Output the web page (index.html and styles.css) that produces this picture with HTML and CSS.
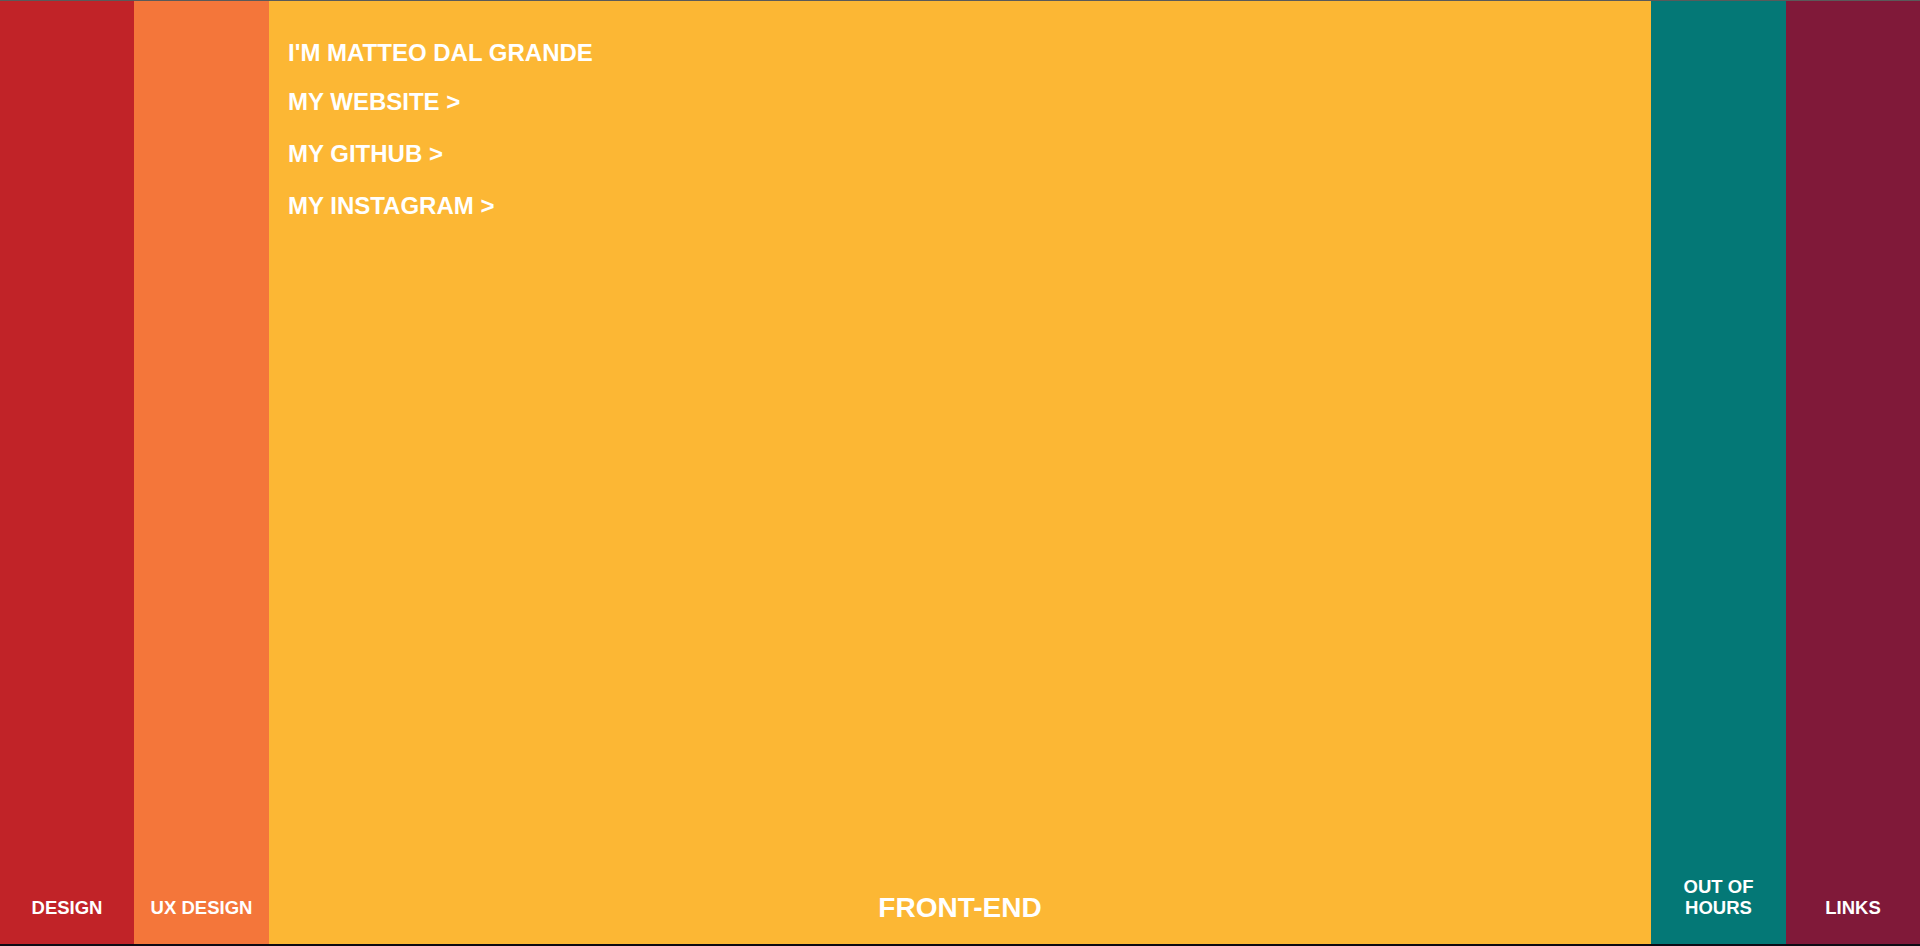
FILE: index.html
```html
<!DOCTYPE html>
<html lang="en">
<head>
<meta charset="utf-8">
<title>Matteo Dal Grande</title>
<link rel="stylesheet" href="styles.css">
</head>
<body>
<main class="panels">
  <section class="panel panel-design">
    <h2 class="label">DESIGN</h2>
  </section>
  <section class="panel panel-ux">
    <h2 class="label">UX DESIGN</h2>
  </section>
  <section class="panel panel-front panel-open">
    <div class="content">
      <h1 class="title">I'M MATTEO DAL GRANDE</h1>
      <ul class="links">
        <li><a href="#">MY WEBSITE &gt;</a></li>
        <li><a href="#">MY GITHUB &gt;</a></li>
        <li><a href="#">MY INSTAGRAM &gt;</a></li>
      </ul>
    </div>
    <h2 class="label label-big">FRONT-END</h2>
  </section>
  <section class="panel panel-hours">
    <h2 class="label">OUT OF<br>HOURS</h2>
  </section>
  <section class="panel panel-links">
    <h2 class="label">LINKS</h2>
  </section>
</main>
</body>
</html>
```

FILE: styles.css
```css
html, body {
  margin: 0;
  padding: 0;
}

body {
  background: #0e0a14;
  border-top: 1px solid #5a5a5a;
  font-family: "Liberation Sans", Arial, sans-serif;
  color: #ffffff;
  height: 945px;
  overflow: hidden;
}

.panels {
  display: grid;
  grid-template-columns: 134px 135px 1fr 135px 134px;
  height: 943px;
}

.panel {
  display: flex;
  flex-direction: column;
  justify-content: flex-end;
  align-items: stretch;
  min-width: 0;
}

.panel-design { background: #c12328; }
.panel-ux { background: #f4763a; }
.panel-front { background: #fcb734; }
.panel-hours { background: #047876; }
.panel-links { background: #801939; }

.label {
  margin: 0;
  padding: 0 0 26px;
  text-align: center;
  font-size: 18.5px;
  font-weight: bold;
  line-height: 20.5px;
}

.label-big {
  font-size: 28px;
  line-height: 31px;
  padding-bottom: 21px;
}

.panel-open {
  justify-content: space-between;
}

.content {
  padding: 38px 0 0 19px;
}

.title {
  margin: 0;
  font-size: 24px;
  line-height: 28px;
  font-weight: bold;
}

.links {
  list-style: none;
  margin: 9px 0 0;
  padding: 0;
}

.links li {
  font-size: 24px;
  line-height: 52px;
  font-weight: bold;
}

.links a {
  color: #ffffff;
  text-decoration: none;
}
```
